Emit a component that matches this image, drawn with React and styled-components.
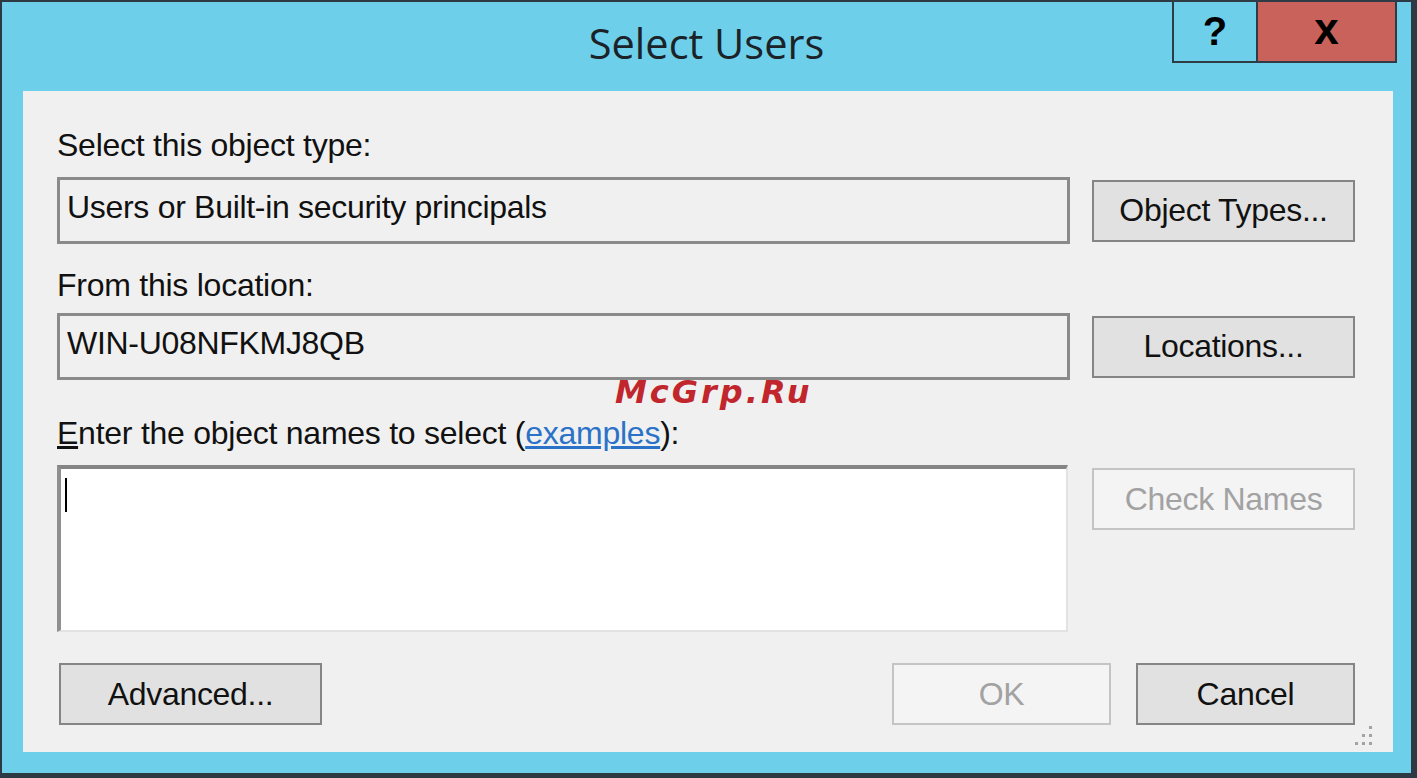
import React from 'react';
import styled, { createGlobalStyle } from 'styled-components';

const GlobalStyle = createGlobalStyle`
  html, body {
    margin: 0;
    padding: 0;
    background: #2b3742;
  }
  body {
    font-family: "Liberation Sans", Arial, sans-serif;
  }
`;

const Frame = styled.div`
  position: relative;
  box-sizing: border-box;
  width: 1417px;
  height: 778px;
  display: flex;
  flex-direction: column;
  background: #6dcfea;
  border-style: solid;
  border-color: #2d3a44;
  border-width: 2px 6px 5px 2px;
`;

const TitleBar = styled.div`
  height: 89px;
  flex: none;
  display: flex;
  justify-content: center;
  align-items: flex-start;
  padding-top: 21px;
  box-sizing: border-box;
`;

const Title = styled.div`
  font-family: "Open Sans", "Noto Sans", sans-serif;
  font-size: 41.5px;
  line-height: 41.5px;
  color: #1b2228;
`;

const CaptionButtons = styled.div`
  position: absolute;
  top: -2px;
  right: 14px;
  display: flex;
`;

const CaptionButton = styled.div`
  box-sizing: border-box;
  width: ${p => p.w}px;
  height: 63px;
  margin-left: ${p => (p.first ? 0 : -2)}px;
  border: 2px solid #2f3c46;
  background: ${p => (p.close ? '#c8625a' : '#6dcfea')};
  display: flex;
  align-items: center;
  justify-content: center;
  font-family: "Liberation Sans", Arial, sans-serif;
  font-weight: bold;
  font-size: ${p => p.fs}px;
  color: #000;
  padding-bottom: ${p => (p.close ? 6 : 0)}px;
`;

const Client = styled.div`
  position: relative;
  flex: 1;
  margin: 0 18px 21px 21px;
  background: #f0f0f0;
  padding: 36px 38px 0 34px;
  display: flex;
  flex-direction: column;
`;

const Label = styled.div`
  font-size: 32px;
  line-height: 36px;
  letter-spacing: -0.25px;
  color: #111;
  margin-top: ${p => p.mt || 0}px;
`;

const Accel = styled.span`
  text-decoration: underline;
`;

const Link = styled.a`
  color: #2a72c8;
  text-decoration: underline;
  cursor: pointer;
`;

const Row = styled.div`
  display: grid;
  grid-template-columns: 1013px 263px;
  column-gap: 22px;
  align-items: ${p => p.align || 'center'};
  margin-top: ${p => p.mt || 0}px;
`;

const Field = styled.div`
  box-sizing: border-box;
  height: 67px;
  border: 3px solid #8a8a8a;
  background: #f0f0f0;
  padding: 9px 0 0 7px;
  font-size: 32px;
  line-height: 36px;
  letter-spacing: -0.3px;
  color: #111;
  white-space: nowrap;
`;

const TextArea = styled.div`
  box-sizing: border-box;
  width: 1011px;
  height: 167px;
  background: #fff;
  border-style: solid;
  border-width: 4px 2px 2px 4px;
  border-color: #858585 #e2e2e2 #e2e2e2 #8f8f8f;
  padding: 9px 0 0 4px;
`;

const Caret = styled.div`
  width: 2px;
  height: 34px;
  background: #000;
`;

const Button = styled.div`
  box-sizing: border-box;
  width: ${p => p.w || 263}px;
  height: 62px;
  border: 2px solid ${p => (p.disabled ? '#c4c4c4' : '#858585')};
  background: ${p => (p.disabled ? '#f4f4f4' : '#e1e1e1')};
  color: ${p => (p.disabled ? '#a2a2a2' : '#111')};
  display: flex;
  align-items: center;
  justify-content: center;
  font-size: 32px;
  letter-spacing: -0.3px;
  margin-top: ${p => p.mt || 0}px;
  margin-left: ${p => p.ml || 0}px;
`;

const BottomRow = styled.div`
  display: flex;
  align-items: center;
  margin-top: 31px;
  gap: 25px;
`;

const Spacer = styled.div`
  flex: 1;
`;

const Watermark = styled.div`
  position: absolute;
  left: 592px;
  top: 285px;
  font-family: "DejaVu Sans", sans-serif;
  font-style: italic;
  font-weight: bold;
  font-size: 32px;
  line-height: 32px;
  letter-spacing: 3px;
  color: #c0262c;
`;

const Grip = styled.svg`
  position: absolute;
  right: 20px;
  bottom: 4px;
`;

export default function App() {
  return (
    <>
      <GlobalStyle />
      <Frame>
        <TitleBar>
          <Title>Select Users</Title>
        </TitleBar>
        <CaptionButtons>
          <CaptionButton first w={86} fs={40}>?</CaptionButton>
          <CaptionButton close w={141} fs={44}>x</CaptionButton>
        </CaptionButtons>
        <Client>
          <Label>Select this object type:</Label>
          <Row mt={14}>
            <Field>Users or Built-in security principals</Field>
            <Button>Object Types...</Button>
          </Row>
          <Label mt={23}>From this location:</Label>
          <Row mt={10}>
            <Field>WIN-U08NFKMJ8QB</Field>
            <Button>Locations...</Button>
          </Row>
          <Label mt={35}>
            <Accel>E</Accel>nter the object names to select (<Link>examples</Link>):
          </Label>
          <Row mt={14} align="start">
            <TextArea>
              <Caret />
            </TextArea>
            <Button disabled mt={3}>Check Names</Button>
          </Row>
          <BottomRow>
            <Button ml={2}>Advanced...</Button>
            <Spacer />
            <Button disabled w={219}>OK</Button>
            <Button w={219}>Cancel</Button>
          </BottomRow>
          <Watermark>McGrp.Ru</Watermark>
          <Grip width="22" height="24" viewBox="0 0 22 24">
            <g fill="#a3a3a3">
              <rect x="18" y="2" width="3" height="3" />
              <rect x="11" y="10" width="3" height="3" />
              <rect x="18" y="10" width="3" height="3" />
              <rect x="4" y="18" width="3" height="3" />
              <rect x="11" y="18" width="3" height="3" />
              <rect x="18" y="18" width="3" height="3" />
            </g>
          </Grip>
        </Client>
      </Frame>
    </>
  );
}
